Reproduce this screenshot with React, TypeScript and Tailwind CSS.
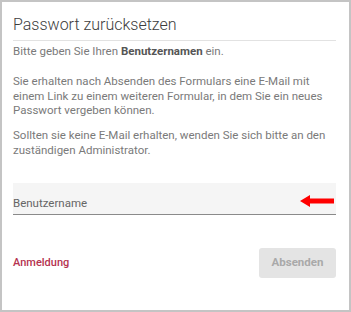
import React from "react";

export default function App() {
  return (
    <div className="w-[351px] h-[312px] bg-white" style={{ fontFamily: "Roboto, 'Liberation Sans', sans-serif" }}>
      <div className="w-full h-full border-2 border-[#c4c4c4] box-border flex flex-col px-[11px]">
        <div className="pt-[13px] pb-[5px] border-b border-[#e2e2e2] mr-[2px]">
          <h1 className="text-[16px] leading-[20px] font-light text-[#3c3c3c]">Passwort zurücksetzen</h1>
        </div>
        <div className="text-[11.5px] leading-[14.5px] text-[#7a7a7a] mt-[3px]">
          <p>
            Bitte geben Sie Ihren <span className="font-bold text-[#555]">Benutzernamen</span> ein.
          </p>
          <p className="mt-[15.5px]">
            Sie erhalten nach Absenden des Formulars eine E-Mail mit einem Link zu einem weiteren Formular, in dem Sie ein neues Passwort vergeben können.
          </p>
          <p className="mt-[10.5px]">
            Sollten sie keine E-Mail erhalten, wenden Sie sich bitte an den zuständigen Administrator.
          </p>
        </div>
        <div className="mt-[26px] mr-[2px] h-[32px] bg-[#f5f5f5] border-b border-[#8a8a8a] flex items-end pb-[4px] relative">
          <span className="text-[11.5px] leading-[14px] text-[#666]">Benutzername</span>
          <svg className="absolute right-[2px] top-[12px]" width="34" height="12" viewBox="0 0 34 12">
            <polygon points="0,6 10,0 10,3.5 34,3.5 34,8.5 10,8.5 10,12" fill="#ff0000" />
          </svg>
        </div>
        <div className="mt-[33px] mr-[2px] flex items-center justify-between">
          <a className="text-[11px] font-medium text-[#b5334f]">Anmeldung</a>
          <button className="w-[77px] h-[30px] rounded-[3px] bg-[#e4e4e4] text-[11.5px] font-bold text-[#a9a9a9]">Absenden</button>
        </div>
      </div>
    </div>
  );
}
